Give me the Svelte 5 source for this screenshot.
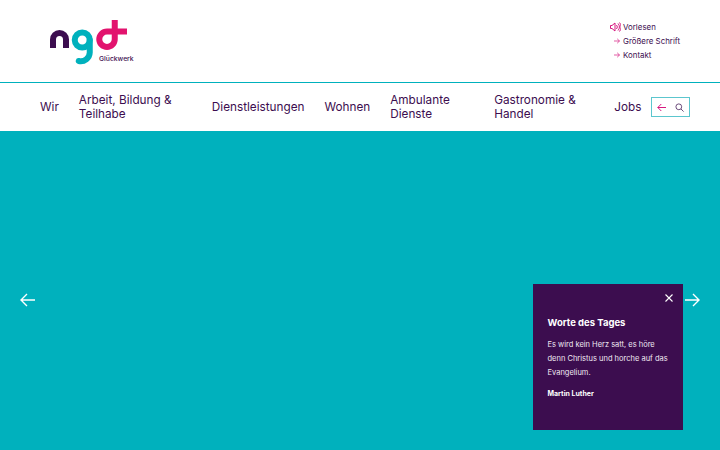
<script>
  const nav = [
    { label: 'Wir' },
    { label: 'Arbeit, Bildung & Teilhabe', width: 113 },
    { label: 'Dienstleistungen' },
    { label: 'Wohnen' },
    { label: 'Ambulante Dienste', width: 84 },
    { label: 'Gastronomie & Handel', width: 100 },
    { label: 'Jobs' }
  ];
  const meta = ['Größere Schrift', 'Kontakt'];
</script>

<div class="page">
  <header>
    <a class="logo" href="#top" aria-label="ngd Glückwerk">
      <svg width="90" height="50" viewBox="0 0 90 50" fill="none" stroke-width="6">
        <path d="M3 29V20.500a6.500 6.500 0 0 1 13 0V29" stroke="#3c0d4f" />
        <circle cx="32.250" cy="21" r="7.500" stroke="#00b1bd" />
        <path d="M39.750 21V33.500a9 9 0 0 1-11 8.500" stroke="#00b1bd" stroke-linecap="round" />
        <path d="M77 12.500H57a7.750 7.750 0 0 0 0 15.500a7.750 7.750 0 0 0 7.750-7.750V1" stroke="#e2136e" />
      </svg>
      <span>Glückwerk</span>
    </a>
    <div class="meta">
      <a href="#top" class="meta-link">
        <svg width="11" height="10" viewBox="0 0 11 10" fill="none" stroke="#d6187f" stroke-width="1">
          <path d="M.5 3.500h1.500L5 1v8L2 6.500H.5z" />
          <path d="M6.500 3a3 3 0 0 1 0 4M8 1.500a5 5 0 0 1 0 7M9.500.5a7 7 0 0 1 0 9" />
        </svg>
        Vorlesen
      </a>
      {#each meta as item}
        <a href="#top" class="meta-link sub">
          <svg width="6" height="6" viewBox="0 0 6 6" fill="none" stroke="#d6187f" stroke-width=".7">
            <path d="M0 3h5.500M3.200.8 5.500 3 3.200 5.200" />
          </svg>
          {item}
        </a>
      {/each}
    </div>
  </header>

  <nav>
    {#each nav as item}
      <a href="#top" style:width={item.width ? item.width + 'px' : null}>{item.label}</a>
    {/each}
    <div class="search">
      <svg width="9" height="9" viewBox="0 0 9 9" fill="none" stroke="#d6187f" stroke-width="1">
        <path d="M9 4.500H.8M4.300 1 .8 4.500 4.300 8" />
      </svg>
      <svg width="9" height="9" viewBox="0 0 9 9" fill="none" stroke="#5d3a6e" stroke-width=".9">
        <circle cx="3.800" cy="3.800" r="2.900" />
        <path d="M6 6l2.600 2.600" />
      </svg>
    </div>
  </nav>

  <main class="hero">
    <button class="arrow prev" aria-label="Zurück">
      <svg width="15" height="14" viewBox="0 0 15 14" fill="none" stroke="#fff" stroke-width="1.400">
        <path d="M15 7H1M7 1 1 7l6 6" />
      </svg>
    </button>
    <button class="arrow next" aria-label="Weiter">
      <svg width="15" height="14" viewBox="0 0 15 14" fill="none" stroke="#fff" stroke-width="1.400">
        <path d="M0 7h14M8 1l6 6-6 6" />
      </svg>
    </button>
    <aside class="card">
      <button class="close" aria-label="Schließen">
        <svg width="8" height="8" viewBox="0 0 8 8" stroke="#fff" stroke-width="1.100">
          <path d="M.5.5l7 7M7.500.5l-7 7" />
        </svg>
      </button>
      <h2>Worte des Tages</h2>
      <p>Es wird kein Herz satt, es höre denn Christus und horche auf das Evangelium.</p>
      <strong>Martin Luther</strong>
    </aside>
  </main>
</div>

<style>
  :global(body) {
    margin: 0;
  }

  .page {
    width: 720px;
    height: 450px;
    display: flex;
    flex-direction: column;
    overflow: hidden;
    font-family: Inter, "Noto Sans", sans-serif;
    color: #3c0d4f;
    background: #fff;
  }

  a {
    color: inherit;
    text-decoration: none;
  }

  header {
    height: 82px;
    flex: none;
    box-sizing: border-box;
    padding: 19px 40px 0 50px;
    display: flex;
    justify-content: space-between;
  }

  .logo {
    width: 90px;
    height: 50px;
    position: relative;
    display: block;
  }

  .logo svg {
    display: block;
  }

  .logo span {
    position: absolute;
    left: 49px;
    top: 35px;
    font-size: 6.800px;
    font-weight: 500;
    white-space: nowrap;
  }

  .meta {
    display: flex;
    flex-direction: column;
    gap: 2px;
    padding-top: 2px;
    width: 70px;
  }

  .meta-link {
    height: 12px;
    font-size: 7.900px;
    line-height: 12px;
    display: flex;
    align-items: center;
    gap: 2px;
    white-space: nowrap;
  }

  .meta-link svg {
    flex: none;
  }

  .meta-link.sub {
    margin-left: 4px;
    gap: 3px;
  }

  nav {
    height: 49px;
    flex: none;
    box-sizing: border-box;
    border-top: 1px solid #00b1bd;
    padding: 0 30px 0 40px;
    display: flex;
    align-items: center;
    gap: 20px;
  }

  nav a {
    font-size: 11.750px;
    line-height: 14px;
    flex: none;
  }

  .search {
    width: 39px;
    height: 20px;
    flex: none;
    margin-left: -10px;
    box-sizing: border-box;
    border: 1px solid #5cc6ce;
    display: flex;
    align-items: center;
    justify-content: space-between;
    padding: 0 5px;
  }

  .hero {
    flex: 1;
    position: relative;
    background: #00b1bd;
  }

  button {
    border: 0;
    padding: 0;
    background: none;
    display: block;
  }

  .arrow {
    position: absolute;
    top: 162px;
  }

  .prev {
    left: 20px;
  }

  .next {
    left: 685px;
  }

  .card {
    position: absolute;
    left: 532.500px;
    top: 153px;
    width: 150px;
    height: 146px;
    box-sizing: border-box;
    padding: 33px 14px 0 15px;
    background: #3c0d4f;
    color: #fff;
  }

  .close {
    position: absolute;
    top: 6px;
    right: 10px;
  }

  h2 {
    margin: 0 0 9px;
    font-size: 9.500px;
    line-height: 12px;
    font-weight: 700;
  }

  p {
    margin: 0 0 8px;
    font-size: 7.500px;
    line-height: 14px;
    color: #f0e8f2;
  }

  strong {
    display: block;
    font-size: 7px;
    line-height: 12px;
    font-weight: 700;
  }
</style>
